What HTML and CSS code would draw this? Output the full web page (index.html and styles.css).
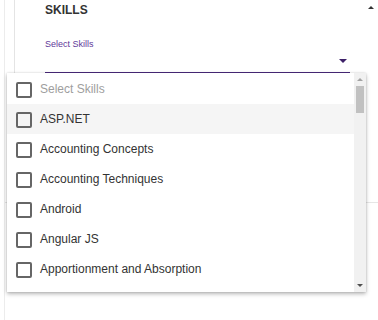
FILE: index.html
```html
<!DOCTYPE html>
<html>
<head>
<meta charset="utf-8">
<link rel="stylesheet" href="styles.css">
</head>
<body>
<div class="outer">
  <div class="card">
    <div class="head">
      <span class="title">SKILLS</span>
      <span class="caret-up"></span>
    </div>
    <div class="field">
      <div class="label">Select Skills</div>
      <div class="control"><span class="caret-down"></span></div>
    </div>
  </div>
  <div class="divider"></div>

  <div class="menu">
    <div class="list">
      <div class="item placeholder"><span class="box"></span><span>Select Skills</span></div>
      <div class="item hover"><span class="box"></span><span>ASP.NET</span></div>
      <div class="item"><span class="box"></span><span>Accounting Concepts</span></div>
      <div class="item"><span class="box"></span><span>Accounting Techniques</span></div>
      <div class="item"><span class="box"></span><span>Android</span></div>
      <div class="item"><span class="box"></span><span>Angular JS</span></div>
      <div class="item"><span class="box"></span><span>Apportionment and Absorption</span></div>
      <div class="item"><span class="box"></span></div>
    </div>
    <div class="scrollbar">
      <span class="arrow-up"></span>
      <span class="thumb"></span>
      <span class="spacer"></span>
      <span class="arrow-down"></span>
    </div>
  </div>
</div>
</body>
</html>
```

FILE: styles.css
```css
html, body {
  margin: 0;
  padding: 0;
  background: #ffffff;
}
body {
  width: 378px;
  height: 320px;
  overflow: hidden;
  font-family: "Liberation Sans", Arial, sans-serif;
  color: #333333;
}
.outer {
  position: relative;
  margin-left: 4px;
  height: 320px;
  border-left: 1px solid #ececec;
}
.card {
  margin-left: 9px;
  width: 336px;
  height: 73px;
  border-left: 1px solid #e4e4e4;
  padding-left: 30px;
  box-sizing: content-box;
}
.head {
  display: flex;
  align-items: center;
  justify-content: space-between;
  padding-top: 3px;
  height: 14px;
  padding-right: 7px;
}
.title {
  font-size: 12px;
  font-weight: bold;
  line-height: 14px;
  color: #333333;
}
.caret-up {
  width: 0;
  height: 0;
  border-left: 3px solid transparent;
  border-right: 3px solid transparent;
  border-bottom: 3px solid #333333;
  margin-top: -6px;
}
.field {
  padding-top: 21px;
  width: 305px;
}
.label {
  font-size: 9px;
  line-height: 12px;
  color: #5f3a9a;
}
.control {
  height: 22px;
  border-bottom: 1px solid #4b2a7c;
  display: flex;
  justify-content: flex-end;
  align-items: flex-start;
  padding-right: 3px;
}
.caret-down {
  margin-top: 9px;
  width: 0;
  height: 0;
  border-left: 4px solid transparent;
  border-right: 4px solid transparent;
  border-top: 4px solid #3d2068;
}
.divider {
  margin-top: 129px;
  height: 0;
  border-top: 1px solid #e6e6e6;
}
.menu {
  position: absolute;
  left: 2px;
  top: 73px;
  width: 359px;
  height: 219px;
  background: #ffffff;
  display: flex;
  box-shadow: 0 2px 4px rgba(0, 0, 0, 0.28), 0 0 2px rgba(0, 0, 0, 0.14);
  overflow: hidden;
}
.list {
  flex: 1;
  padding-top: 1px;
  overflow: hidden;
}
.item {
  height: 30px;
  display: flex;
  align-items: center;
  gap: 8px;
  padding-left: 9px;
  font-size: 12px;
  color: #333333;
}
.item.hover {
  background: #f5f5f5;
}
.item.placeholder {
  color: #9e9e9e;
}
.box {
  width: 12px;
  height: 12px;
  border: 2px solid #666666;
  border-radius: 2px;
  margin-top: 1px;
  flex: none;
}
.scrollbar {
  width: 12px;
  background: #f1f1f1;
  display: flex;
  flex-direction: column;
  align-items: center;
  flex: none;
}
.arrow-up {
  margin-top: 5px;
  width: 0;
  height: 0;
  border-left: 3px solid transparent;
  border-right: 3px solid transparent;
  border-bottom: 3px solid #a3a3a3;
}
.thumb {
  margin-top: 5px;
  width: 8px;
  height: 27px;
  background: #c1c1c1;
}
.spacer {
  flex: 1;
}
.arrow-down {
  margin-bottom: 5px;
  width: 0;
  height: 0;
  border-left: 3px solid transparent;
  border-right: 3px solid transparent;
  border-top: 3px solid #505050;
}
```
